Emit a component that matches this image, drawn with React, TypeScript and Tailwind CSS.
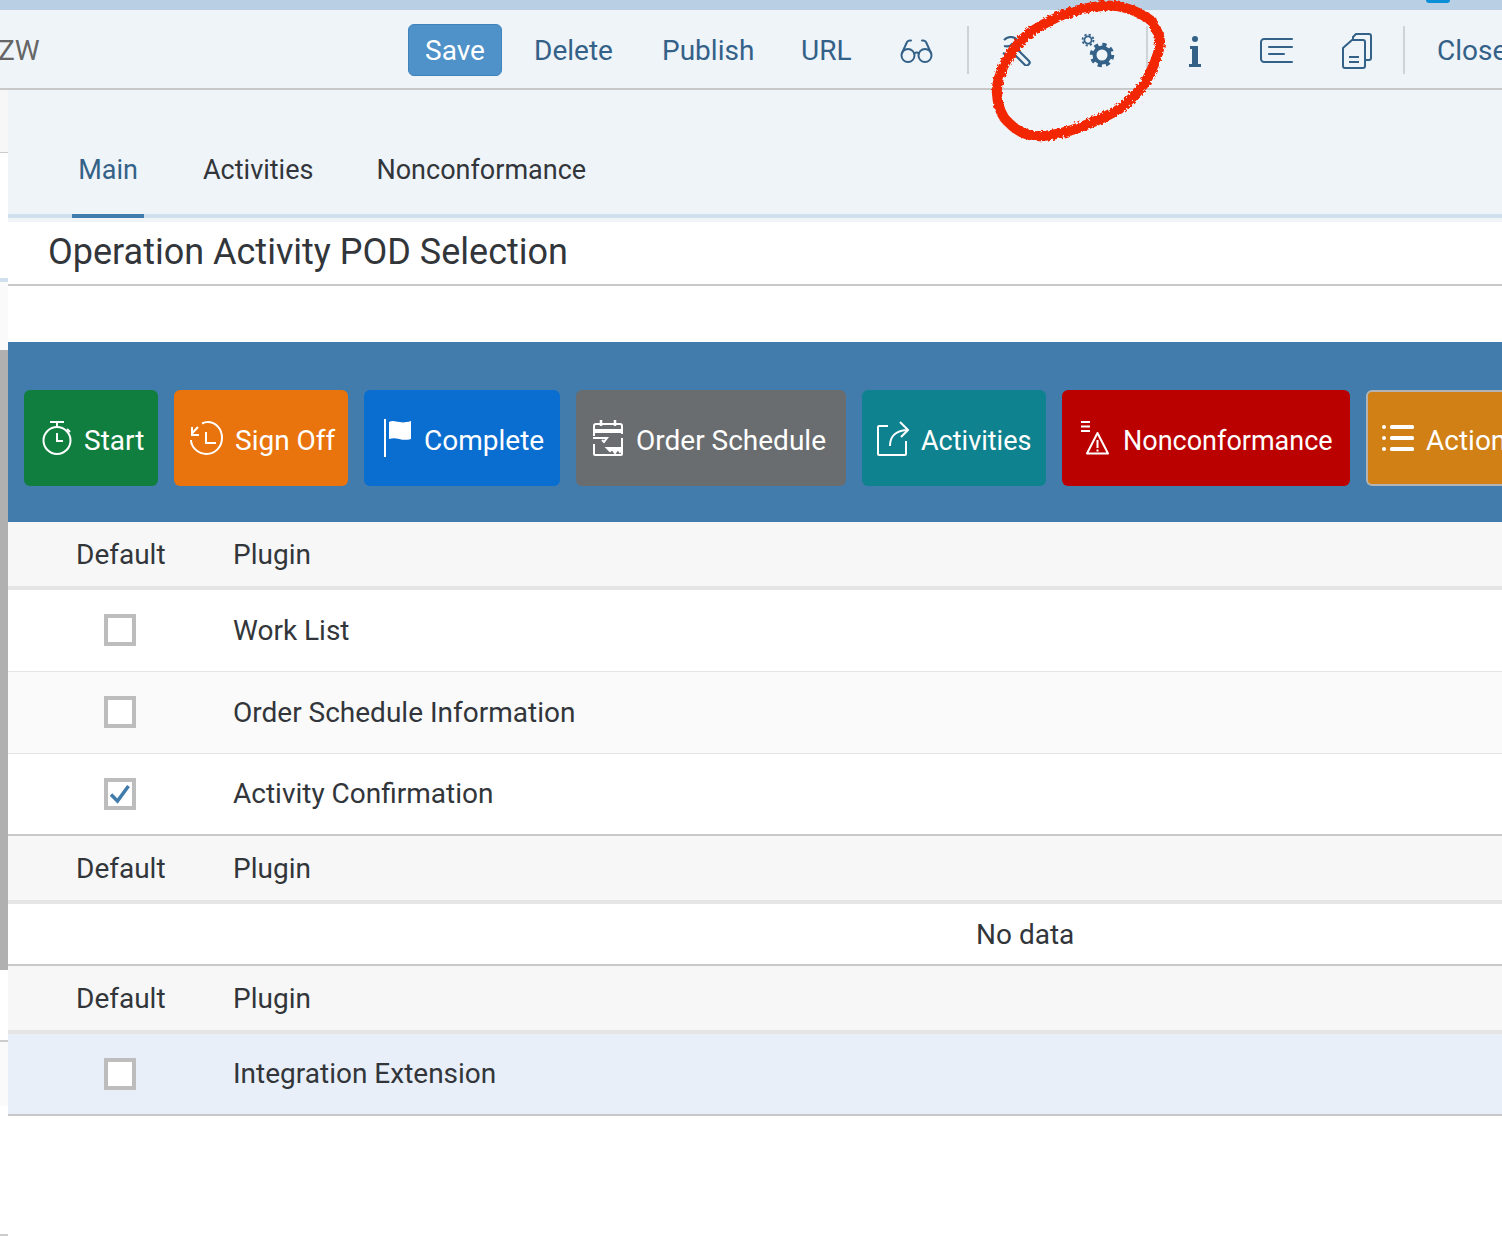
// App.tsx
import type { ReactNode } from "react";

/* ─── toolbar icons ─────────────────────────────────── */
const Glasses = () => (
  <svg width="36" height="26" viewBox="0 0 36 26" fill="none" stroke="#346187" strokeWidth="2" strokeLinecap="round" className="block shrink-0">
    <circle cx="9" cy="17.5" r="6.5" />
    <circle cx="26" cy="17.5" r="6.5" />
    <path d="M15 15.5c2-1.5 3.500-1.500 5 0" />
    <path d="M3 15 8 4c1-1.500 2.500-1.800 4-1.500" />
    <path d="M32 15 27 4c-1-1.500-2.500-1.800-4-1.500" />
  </svg>
);

const Tools = () => (
  <svg width="32" height="30" viewBox="0 0 32 30" fill="none" stroke="#346187" strokeWidth="2.200" strokeLinejoin="round" className="block">
    <path d="M3 4C7 0 13 0 16 4c3 3 3 7 1 10l11 11c1 1 1 2 0 3l-1 1c-1 1-2 1-3 0L13 18c-4 2-8 1-11-1" />
    <path d="M3 10c4 1 7 0 9-3" />
  </svg>
);

const Gears = () => (
  <svg width="34" height="36" viewBox="0 0 34 36" fill="none" stroke="#346187" className="block">
    <circle cx="7" cy="7" r="3.600" strokeWidth="1.800" />
    <circle cx="7" cy="7" r="5.500" strokeWidth="1.800" strokeDasharray="2.200 2.120" />
    <circle cx="21" cy="22" r="7.500" strokeWidth="4" />
    <circle cx="21" cy="22" r="10.500" strokeWidth="3.500" strokeDasharray="4.200 4.050" />
  </svg>
);

const InfoIcon = () => (
  <svg width="12" height="32" viewBox="0 0 12 32" fill="#346187" className="block">
    <circle cx="6" cy="4" r="3" />
    <path d="M1 11h8v18h3v3H0v-3h3V14H1Z" />
  </svg>
);

const TextBox = () => (
  <svg width="33" height="28" viewBox="0 0 33 28" fill="none" stroke="#346187" strokeWidth="2" strokeLinecap="round" className="block">
    <path d="M32 2H4C2.500 2 1 3.500 1 5v17c0 1.500 1.500 3 3 3h28" />
    <path d="M9 10h23M9 17h15" />
  </svg>
);

const Copies = () => (
  <svg width="30" height="36" viewBox="0 0 30 36" fill="none" stroke="#346187" strokeWidth="2" strokeLinejoin="round" className="block">
    <path d="M11 7V4l3-3h13c1 0 2 1 2 2v22c0 1-1 2-2 2h-4" />
    <path d="M10 7h11c1 0 2 1 2 2v24c0 1-1 2-2 2H3c-1 0-2-1-2-2V15Z" />
    <path d="M7 24h10M7 29h10" />
  </svg>
);

/* ─── action button icons ───────────────────────────── */
const Stopwatch = () => (
  <svg width="30" height="36" viewBox="0 0 30 36" fill="none" stroke="#fff" strokeWidth="2" className="block">
    <circle cx="15" cy="20.500" r="13.500" />
    <path d="M8 2h14M15 2v5M25 9l3 3M15 13v8h6" />
  </svg>
);

const SignOffIcon = () => (
  <svg width="34" height="36" viewBox="0 0 34 36" fill="none" stroke="#fff" strokeWidth="2" className="block">
    <path d="M13 3.500c2-1 4-1.500 5.500-1.500C27 2 33 9 33 18s-7 16-15.500 16C9 34 2 27 2 20" />
    <path d="M2.500 14 9 7M2 8h1v7h7M17 12v11h10" />
  </svg>
);

const Flag = () => (
  <svg width="28" height="38" viewBox="0 0 28 38" className="block">
    <path d="M1 0v38" stroke="#fff" strokeWidth="2" />
    <path d="M5 3c6-3 10 3 22-1v18c-10 3-14-3-22 0Z" fill="#fff" />
  </svg>
);

const Schedule = () => (
  <svg width="30" height="36" viewBox="0 0 30 36" fill="none" stroke="#fff" strokeWidth="2" className="block">
    <path d="M1 16V6c0-1 1-2 2-2h24c1 0 2 1 2 2v8" strokeWidth="2" />
    <path d="M1 11h28" strokeWidth="4" />
    <path d="M8 0v6M22 0v6" strokeWidth="2.500" />
    <path d="M0 18h14l-3 4-2-2M29 18v16c0 1-1 1-2 1H3c-1 0-2 0-2-1V24" />
    <path d="M14 28h16l-3 4-2-3-3 4-3-4-2 2Z" fill="#fff" />
  </svg>
);

const ShareBox = () => (
  <svg width="32" height="36" viewBox="0 0 32 36" fill="none" stroke="#fff" strokeWidth="2" className="block">
    <path d="M11 6H2c-.6 0-1 .4-1 1v27c0 .6.4 1 1 1h26c.6 0 1-.4 1-1V21" />
    <path d="M13 26c0-9 4-15 17-16M23 2l8 8-7 7" />
  </svg>
);

const WarnList = () => (
  <svg width="30" height="36" viewBox="0 0 30 36" fill="none" stroke="#fff" strokeWidth="2" className="block">
    <path d="M1 2h9M1 6.500h9M1 11h9" />
    <path d="M17.500 13 28 33.500H7Z" strokeLinejoin="round" />
    <path d="M17.500 20v8M17.500 29.500v2" />
  </svg>
);

const ListIcon = () => (
  <svg width="32" height="28" viewBox="0 0 32 28" fill="#fff" className="block">
    <circle cx="2" cy="3" r="2" />
    <circle cx="2" cy="14" r="2" />
    <circle cx="2" cy="25" r="2" />
    <rect x="8" y="1" width="24" height="4" rx="1.500" />
    <rect x="8" y="12" width="24" height="4" rx="1.500" />
    <rect x="8" y="23" width="24" height="4" rx="1.500" />
  </svg>
);

/* ─── bits ──────────────────────────────────────────── */
const ActionButton = ({ label, icon, className }: { label: string; icon: ReactNode; className: string }) => (
  <div className={`flex h-24 shrink-0 items-center rounded-md text-white ${className}`}>
    {icon}
    <span className="whitespace-nowrap pt-1.5">{label}</span>
  </div>
);

const Checkbox = ({ checked = false }: { checked?: boolean }) => (
  <div className="flex h-8 w-8 items-center justify-center border-4 border-[#bdbdbd] bg-white">
    {checked && (
      <svg width="20" height="20" viewBox="0 0 20 20" fill="none" stroke="#427cac" strokeWidth="3.500" className="block">
        <path d="M1 10.500 7.500 17 18.500 2" />
      </svg>
    )}
  </div>
);

const HeaderRow = () => (
  <div className="box-content flex h-16 items-center border-b-4 border-[#e5e5e5] bg-[#f7f7f7] pt-0 text-[#32363a]">
    <span className="ml-[68px] w-[157px] pt-0.5">Default</span>
    <span className="pt-0.5">Plugin</span>
  </div>
);

const Row = ({ label, checked, className, boxClass = "" }: { label: string; checked?: boolean; className: string; boxClass?: string }) => (
  <div className={`flex h-[82px] items-center text-[#32363a] ${className}`}>
    <div className={`ml-24 w-[129px] ${boxClass}`}>
      <Checkbox checked={checked} />
    </div>
    <span>{label}</span>
  </div>
);

const Scribble = () => (
  <svg width="190" height="160" viewBox="0 0 190 160" fill="none" className="pointer-events-none absolute left-[985px] top-0">
    <defs>
      <filter id="rough" x="-10%" y="-10%" width="120%" height="120%">
        <feTurbulence type="fractalNoise" baseFrequency="0.35" numOctaves="2" seed="4" />
        <feDisplacementMap in="SourceGraphic" scale="5" />
      </filter>
    </defs>
    <path
      d="M168 22C150 8 130 4 117 6 100 7 88 11 77 15 64 21 54 26 43 34 32 43 26 52 20 63 14 75 11 85 12 94 13 108 17 117 24 123 34 133 46 137 58 136 70 135 82 132 93 128 107 123 120 117 133 110 146 100 153 92 160 83 168 68 174 55 175 43 175 36 173 32 170 28"
      stroke="#f22600"
      strokeWidth="10"
      strokeLinecap="round"
      filter="url(#rough)"
    />
  </svg>
);

/* ─── main ──────────────────────────────────────────── */
export default function App() {
  return (
    <div className="relative h-[1236px] w-[1502px] overflow-hidden bg-white font-['Roboto',sans-serif] text-[28px] leading-none">
      {/* top strip */}
      <div className="relative h-2.5 bg-[#b9cfe4]">
        <div className="absolute left-[1426px] top-0 h-[3px] w-6 rounded-b-full bg-[#0a8fd6]" />
      </div>

      {/* header */}
      <div className="flex h-20 items-center overflow-hidden border-b-2 border-[#c8c8c8] bg-[#eff4f9] pt-1 text-[#346187]">
        <span className="-ml-0.5 w-[410px] shrink-0 text-[#666]">ZW</span>
        <div className="-mt-0.5 flex h-[52px] w-[94px] shrink-0 items-center justify-center rounded-md border border-[#3f83bd] bg-[#4f91c9] pt-0.5 text-white">
          Save
        </div>
        <span className="ml-8 w-[96px] shrink-0">Delete</span>
        <span className="ml-8 w-[107px] shrink-0">Publish</span>
        <span className="ml-8 w-[98px] shrink-0">URL</span>
        <Glasses />
        <div className="-mt-0.5 ml-8 h-12 w-0.5 shrink-0 bg-[#cdd3d9]" />
        <div className="ml-8 shrink-0"><Tools /></div>
        <div className="ml-[48px] shrink-0"><Gears /></div>
        <div className="-mt-0.5 ml-[31px] h-12 w-0.5 shrink-0 bg-[#cdd3d9]" />
        <div className="ml-[41px] shrink-0"><InfoIcon /></div>
        <div className="ml-[59px] shrink-0"><TextBox /></div>
        <div className="ml-[49px] shrink-0"><Copies /></div>
        <div className="-mt-0.5 ml-[31px] h-12 w-0.5 shrink-0 bg-[#cdd3d9]" />
        <span className="ml-8 shrink-0">Close</span>
      </div>

      <div className="flex">
        {/* left rail */}
        <div className="w-2 shrink-0">
          <div className="h-[62px] bg-[#f7f7f7]" />
          <div className="h-px bg-[#ccc]" />
          <div className="h-[125px] bg-white" />
          <div className="h-1 bg-[#d1e0ef]" />
          <div className="h-[68px] bg-[#fafafa]" />
          <div className="h-[620px] bg-[#b0b0b0]" />
          <div className="h-[70px] bg-white" />
          <div className="h-0.5 bg-[#ccc]" />
          <div className="h-[64px] bg-[#fafafa]" />
          <div className="h-32 bg-white" />
          <div className="h-0.5 bg-[#ccc]" />
        </div>

        <div className="min-w-0 flex-1">
          {/* tabs */}
          <div className="bg-[#eff4f9] pb-1 text-[27px]">
            <div className="flex h-[124px] items-end pl-16">
              <div className="flex h-[68px] w-[72px] shrink-0 justify-center pt-[11px] text-[#346187]">Main</div>
              <div className="ml-[59px] h-[68px] shrink-0 pt-[11px] text-[#32363a]">Activities</div>
              <div className="ml-[63px] h-[68px] shrink-0 pt-[11px] text-[#32363a]">Nonconformance</div>
            </div>
            <div className="h-1 bg-[#d1e0ef] pl-16">
              <div className="h-1 w-[72px] bg-[#427cac]" />
            </div>
          </div>

          {/* title */}
          <div className="flex h-16 items-center border-b-2 border-[#c8c8c8] pb-0.5 pl-10 text-[36px] text-[#32363a]">
            Operation Activity POD Selection
          </div>
          <div className="h-14" />

          {/* action bar */}
          <div className="flex h-[180px] items-start gap-4 overflow-hidden bg-[#427cac] pl-4 pt-12">
            <ActionButton label="Start" icon={<Stopwatch />} className="w-[134px] gap-3 bg-[#107e3e] pl-[18px]" />
            <ActionButton label="Sign Off" icon={<SignOffIcon />} className="w-[174px] gap-3 bg-[#e9730c] pl-[15px]" />
            <ActionButton label="Complete" icon={<Flag />} className="w-[196px] gap-3 bg-[#0a6ed1] pl-5" />
            <ActionButton label="Order Schedule" icon={<Schedule />} className="w-[270px] gap-[13px] bg-[#6a6d70] pl-[17px]" />
            <ActionButton label="Activities" icon={<ShareBox />} className="w-[184px] gap-3 bg-[#0f828f] pl-[15px] text-[27px]" />
            <ActionButton label="Nonconformance" icon={<WarnList />} className="w-[288px] gap-[13px] bg-[#bb0000] pl-[18px] text-[27px]" />
            <ActionButton label="Action" icon={<ListIcon />} className="w-[180px] gap-3 border-2 border-[#b3b3b3] bg-[#d08014] pl-3.5" />
          </div>

          {/* plugin tables */}
          <HeaderRow />
          <Row label="Work List" boxClass="-mt-0.5" className="border-b border-[#e5e5e5] bg-white" />
          <Row label="Order Schedule Information" boxClass="-mt-0.5" className="border-b border-[#e5e5e5] bg-[#fafafa]" />
          <Row label="Activity Confirmation" checked className="border-b-2 border-[#c8c8c8] bg-white" />

          <HeaderRow />
          <div className="flex h-[62px] items-center border-b-2 border-[#c8c8c8] pl-[968px] pt-0.5 text-[#32363a]">No data</div>

          <HeaderRow />
          <Row label="Integration Extension" className="border-b-2 border-[#c8c8c8] bg-[#e8eff8]" />
        </div>
      </div>

      <Scribble />
    </div>
  );
}
